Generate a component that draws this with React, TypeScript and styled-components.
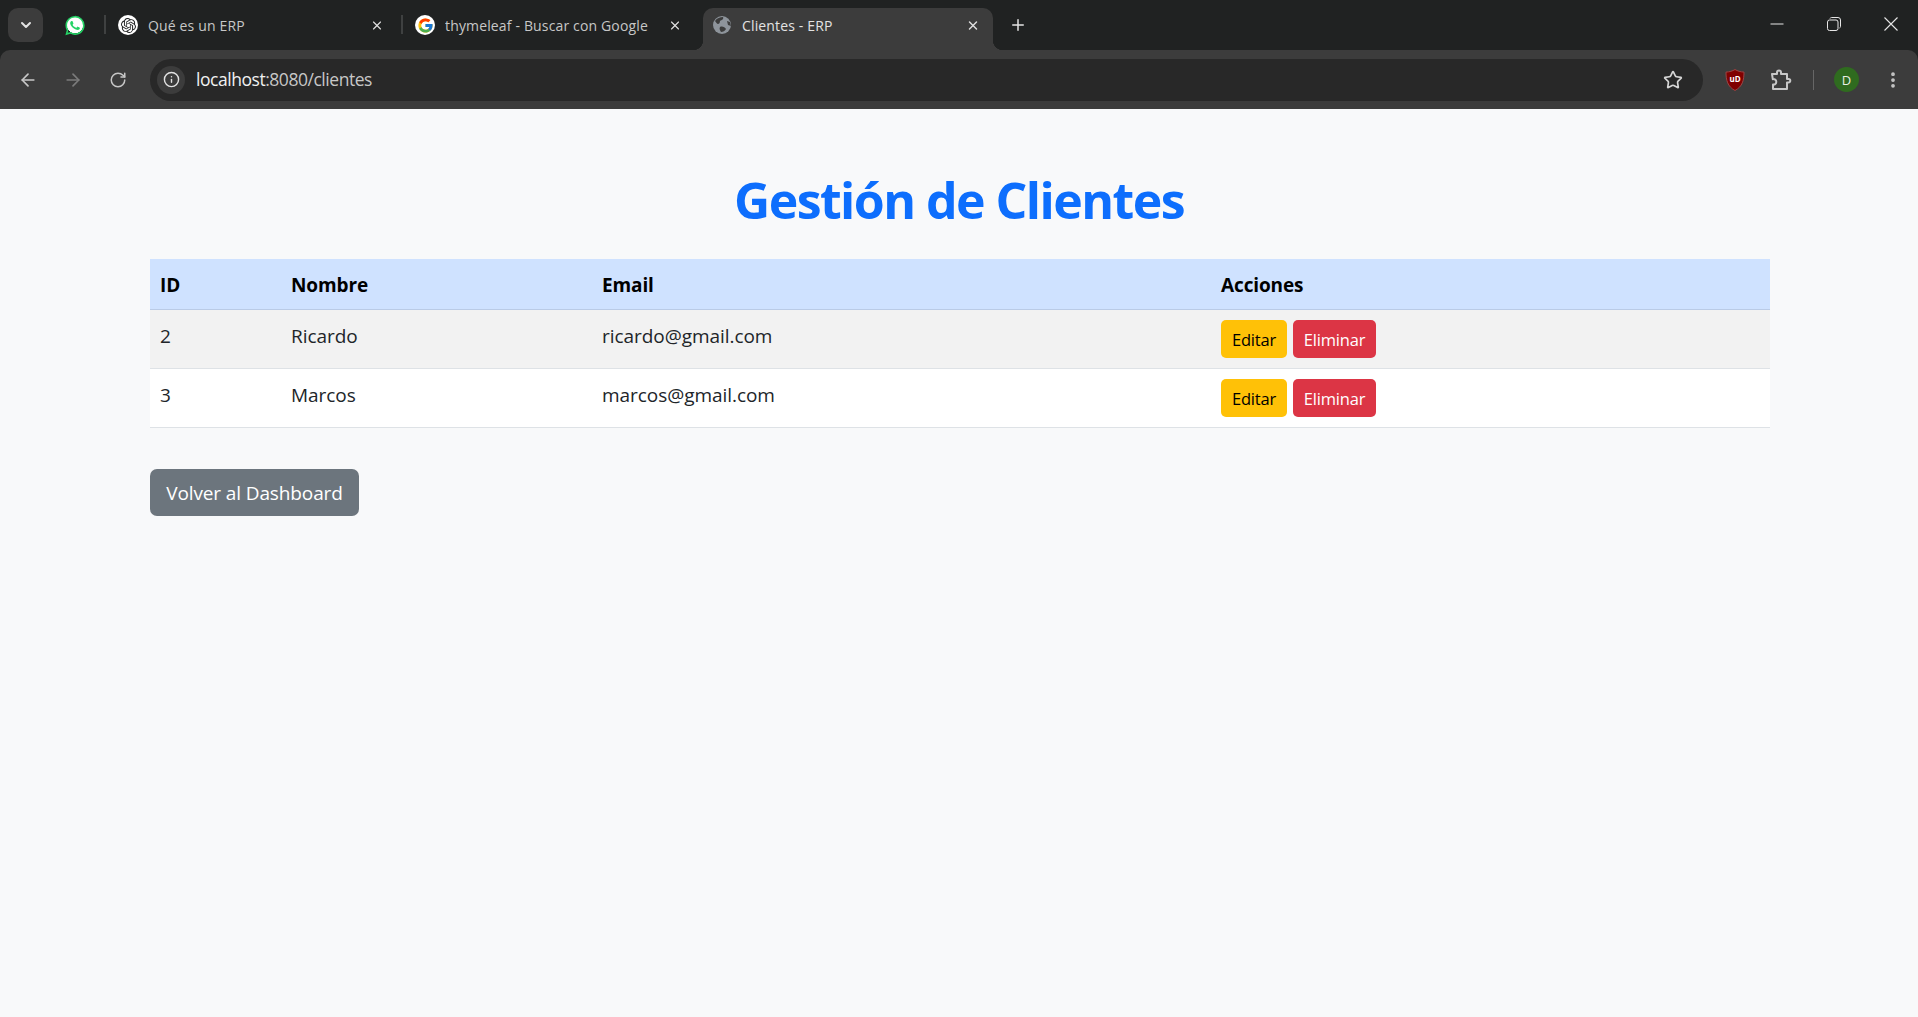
import React from 'react';
import styled, { createGlobalStyle } from 'styled-components';
import { ArrowLeft, ArrowRight, ChevronDown, Info, MoreVertical, Plus, RotateCw, Star, X } from 'lucide-react';
import { FcGoogle } from 'react-icons/fc';
import { IoLogoWhatsapp } from 'react-icons/io5';
import { SiOpenai } from 'react-icons/si';

const GlobalStyle = createGlobalStyle`
  html, body {
    margin: 0;
    padding: 0;
    height: 100%;
    background: #f8f9fa;
    font-family: "Open Sans", "Noto Sans", sans-serif;
    overflow: hidden;
  }
  * { box-sizing: border-box; }
`;

const Shell = styled.div`
  width: 1918px;
  height: 1017px;
  display: flex;
  flex-direction: column;
  overflow: hidden;
  background: #202222;
`;

const TabStrip = styled.div`
  height: 50px;
  flex: none;
  display: flex;
  align-items: flex-start;
  padding-left: 8px;
`;

const TabSearch = styled.div`
  width: 35px;
  height: 34px;
  margin-top: 8px;
  border-radius: 10px;
  background: #3c3c3c;
  color: #e3e3e3;
  display: flex;
  align-items: center;
  justify-content: center;
`;

const PinnedTab = styled.div`
  width: 22px;
  height: 22px;
  margin: 14px 18px 0 21px;
  display: flex;
  align-items: center;
  justify-content: center;
  background: radial-gradient(circle, #fff 0 8px, transparent 8.5px);
  color: #25d366;
`;

const TabDivider = styled.div`
  width: 2px;
  height: 19px;
  margin-top: 15px;
  background: #3f4141;
`;

const Tab = styled.div<{ $active?: boolean; $width: number; $closeGap: number }>`
  position: relative;
  width: ${props => props.$width}px;
  height: 42px;
  margin-top: 8px;
  padding: 0 ${props => props.$closeGap}px 8px ${props => (props.$active ? 9 : 12)}px;
  display: flex;
  align-items: center;
  border-radius: 10px 10px 0 0;
  background: ${props => (props.$active ? '#3c3c3c' : 'transparent')};
  color: ${props => (props.$active ? '#e3e3e3' : '#c7c7c7')};

  ${props =>
    props.$active &&
    `
    &::before, &::after {
      content: '';
      position: absolute;
      bottom: 0;
      width: 10px;
      height: 10px;
    }
    &::before {
      left: -10px;
      background: radial-gradient(circle at 0 0, transparent 10px, #3c3c3c 10.5px);
    }
    &::after {
      right: -10px;
      background: radial-gradient(circle at 100% 0, transparent 10px, #3c3c3c 10.5px);
    }
  `}
`;

const Favicon = styled.span<{ $white?: boolean }>`
  width: 20px;
  height: 20px;
  flex: none;
  border-radius: 50%;
  background: ${props => (props.$white ? '#fff' : 'transparent')};
  color: #202222;
  display: flex;
  align-items: center;
  justify-content: center;
`;

const TabTitle = styled.span`
  flex: 1;
  margin-left: 10px;
  font-size: 14px;
  letter-spacing: 0.15px;
  white-space: nowrap;
  overflow: hidden;
`;

const TabClose = styled.span`
  width: 14px;
  height: 14px;
  flex: none;
  display: flex;
  align-items: center;
  justify-content: center;
  color: #dedede;
`;

const NewTab = styled.div`
  width: 18px;
  height: 18px;
  margin: 16px 0 0 16px;
  color: #e3e3e3;
  display: flex;
  align-items: center;
  justify-content: center;
`;

const WindowControls = styled.div`
  margin-left: auto;
  display: flex;
  align-items: center;
  height: 48px;
  padding-right: 20px;
  color: #e6e6e6;
  gap: 43px;
`;

const Toolbar = styled.div`
  height: 59px;
  flex: none;
  background: #3c3c3c;
  border-radius: 10px 10px 0 0;
  display: flex;
  align-items: center;
  padding-left: 17px;
`;

const NavIcon = styled.span<{ $dim?: boolean }>`
  width: 22px;
  height: 22px;
  margin-right: 23px;
  display: flex;
  align-items: center;
  justify-content: center;
  color: ${props => (props.$dim ? '#7b7b7b' : '#c7c7c7')};
`;

const Omnibox = styled.div`
  width: 1553px;
  height: 42px;
  margin-left: -2px;
  padding: 0 20px 0 7px;
  border-radius: 21px;
  background: #282828;
  display: flex;
  align-items: center;
`;

const SiteInfo = styled.span`
  width: 28px;
  height: 28px;
  border-radius: 50%;
  background: #3c3c3c;
  color: #e3e3e3;
  display: flex;
  align-items: center;
  justify-content: center;
`;

const Url = styled.span`
  margin: 0 0 2px 11px;
  font-size: 17.5px;
  letter-spacing: -0.46px;
  color: #c7c7c7;

  b {
    font-weight: 400;
    color: #f1f1f1;
  }
`;

const StarSlot = styled.span`
  margin-left: auto;
  color: #d6d6d6;
  display: flex;
`;

const ExtensionSlot = styled.span<{ $gap: number }>`
  margin-left: ${props => props.$gap}px;
  width: 22px;
  height: 22px;
  display: flex;
  align-items: center;
  justify-content: center;
  color: #c7c7c7;
`;

const ToolbarDivider = styled.span`
  width: 1px;
  height: 20px;
  margin-left: 21px;
  background: #666;
`;

const Avatar = styled.span`
  width: 25px;
  height: 25px;
  margin-left: 20px;
  border-radius: 50%;
  background: #2f6b1f;
  color: #e8f0e4;
  font-size: 13px;
  display: flex;
  align-items: center;
  justify-content: center;
`;

const Content = styled.main`
  flex: 1;
  padding: 60px 148px 0 150px;
  background: #f8f9fa;
`;

const Heading = styled.h1`
  margin: 0 0 30px;
  height: 60px;
  padding-top: 1px;
  padding-right: 2px;
  font-size: 50px;
  line-height: 60px;
  font-weight: 700;
  letter-spacing: -1.55px;
  text-align: center;
  color: #0d6efd;
`;

const Table = styled.table`
  width: 100%;
  table-layout: fixed;
  border-collapse: separate;
  border-spacing: 0;
  font-size: 19px;
  line-height: 30px;
  color: #212529;
`;

const HeadCell = styled.th<{ $width?: number }>`
  width: ${props => (props.$width ? `${props.$width}px` : 'auto')};
  padding: 11px 10px 9px;
  text-align: left;
  font-weight: 700;
  letter-spacing: -0.12px;
  color: #000;
  background: #cfe2ff;
  border-bottom: 1px solid #bacbe6;
`;

const Row = styled.tr<{ $striped?: boolean }>`
  background: ${props => (props.$striped ? '#f2f2f2' : '#fff')};
`;

const Cell = styled.td`
  padding: 11px 10px 9px;
  vertical-align: top;
  letter-spacing: -0.05px;
  border-bottom: 1px solid #dee2e6;
`;

const Actions = styled.div`
  display: flex;
  gap: 6px;
  margin: -1px 0 1px;
`;

const SmallButton = styled.button<{ $tone: 'warning' | 'danger'; $width: number }>`
  width: ${props => props.$width}px;
  height: 38px;
  padding: 0;
  border: 0;
  border-radius: 5px;
  font-family: inherit;
  font-size: 16.5px;
  letter-spacing: -0.2px;
  background: ${props => (props.$tone === 'warning' ? '#ffc107' : '#dc3545')};
  color: ${props => (props.$tone === 'warning' ? '#000' : '#fff')};
`;

const BackButton = styled.a`
  display: flex;
  align-items: center;
  justify-content: center;
  width: 209px;
  height: 47px;
  margin-top: 41px;
  border-radius: 7px;
  background: #6c757d;
  color: #fff;
  font-size: 19px;
  letter-spacing: -0.12px;
`;

const Globe = () => (
  <svg width="20" height="20" viewBox="0 0 20 20">
    <circle cx="10" cy="10" r="9" fill="#8e949b" />
    <path d="M3 6c2-3 5-4 8-4 1 2-1 3-3 4 0 2-1 3-2 3C5 9 4 7 3 6z" fill="#3c3c3c" />
    <path d="M8 12c2-1 5 0 6 2-1 2-3 3-5 3-1-2-2-3-1-5z" fill="#3c3c3c" />
    <path d="M15 6l3 1 1 4-3-1z" fill="#3c3c3c" />
  </svg>
);

const MinimizeIcon = () => (
  <svg width="14" height="14" viewBox="0 0 14 14" fill="none" stroke="currentColor">
    <path d="M.5 7h13" />
  </svg>
);

const RestoreIcon = () => (
  <svg width="14" height="14" viewBox="0 0 14 14" fill="none" stroke="currentColor">
    <rect x="0.5" y="3" width="10.5" height="10.5" rx="2" />
    <path d="M3 1.5c.3-.7.9-1 1.5-1H11A2.5 2.5 0 0 1 13.5 3v6.5c0 .7-.4 1.2-1 1.5" />
  </svg>
);

const CloseIcon = () => (
  <svg width="14" height="14" viewBox="0 0 14 14" fill="none" stroke="currentColor" strokeWidth="1.1">
    <path d="M.5.5l13 13M13.5.5l-13 13" />
  </svg>
);

const UBlockIcon = () => (
  <svg width="20" height="22" viewBox="0 0 20 22">
    <path d="M10 .5c2.5 1.6 5.500 2.400 9 2.600 0 8-1.500 14.500-9 18.400C2.500 17.600 1 11.100 1 3.100 4.500 2.900 7.500 2.100 10 .5z" fill="#800000" stroke="#9c4444" />
    <text x="10" y="12.500" textAnchor="middle" fontSize="8" fontWeight="700" fill="#fff" fontFamily="Open Sans, sans-serif">uD</text>
  </svg>
);

const PuzzleIcon = () => (
  <svg width="22" height="22" viewBox="0 0 22 22" fill="none" stroke="currentColor" strokeWidth="2" strokeLinejoin="round">
    <path d="M2 5h5V3.500a2 2 0 0 1 4 0V5h6v5h1.500a1.800 1.800 0 0 1 0 3.600H17V20H3v-4.500c2 .3 3.300-.9 3.300-2.700S4.500 9.800 2.800 10.200z" />
  </svg>
);

const clients = [
  { id: 2, name: 'Ricardo', email: 'ricardo@gmail.com' },
  { id: 3, name: 'Marcos', email: 'marcos@gmail.com' },
];

const App = () => (
  <Shell>
    <GlobalStyle />
    <TabStrip>
      <TabSearch>
        <ChevronDown size={16} strokeWidth={3} />
      </TabSearch>
      <PinnedTab>
        <IoLogoWhatsapp size={23} />
      </PinnedTab>
      <TabDivider />
      <Tab $width={295} $closeGap={17}>
        <Favicon $white>
          <SiOpenai size={15} />
        </Favicon>
        <TabTitle>Qué es un ERP</TabTitle>
        <TabClose>
          <X size={15} strokeWidth={2} />
        </TabClose>
      </Tab>
      <TabDivider />
      <Tab $width={300} $closeGap={21}>
        <Favicon $white>
          <FcGoogle size={17} />
        </Favicon>
        <TabTitle>thymeleaf - Buscar con Google</TabTitle>
        <TabClose>
          <X size={15} strokeWidth={2} />
        </TabClose>
      </Tab>
      <Tab $active $width={290} $closeGap={13}>
        <Favicon>
          <Globe />
        </Favicon>
        <TabTitle>Clientes - ERP</TabTitle>
        <TabClose>
          <X size={15} strokeWidth={2.500} />
        </TabClose>
      </Tab>
      <NewTab>
        <Plus size={18} strokeWidth={2} />
      </NewTab>
      <WindowControls>
        <MinimizeIcon />
        <RestoreIcon />
        <CloseIcon />
      </WindowControls>
    </TabStrip>
    <Toolbar>
      <NavIcon>
        <ArrowLeft size={20} strokeWidth={2} />
      </NavIcon>
      <NavIcon $dim>
        <ArrowRight size={20} strokeWidth={2} />
      </NavIcon>
      <NavIcon>
        <RotateCw size={18} strokeWidth={2} />
      </NavIcon>
      <Omnibox>
        <SiteInfo>
          <Info size={17} strokeWidth={2} />
        </SiteInfo>
        <Url>
          <b>localhost</b>:8080/clientes
        </Url>
        <StarSlot>
          <Star size={20} strokeWidth={2} />
        </StarSlot>
      </Omnibox>
      <ExtensionSlot $gap={21}>
        <UBlockIcon />
      </ExtensionSlot>
      <ExtensionSlot $gap={24}>
        <PuzzleIcon />
      </ExtensionSlot>
      <ToolbarDivider />
      <Avatar>D</Avatar>
      <ExtensionSlot $gap={23}>
        <MoreVertical size={20} strokeWidth={2.500} />
      </ExtensionSlot>
    </Toolbar>
    <Content>
      <Heading>Gestión de Clientes</Heading>
      <Table>
        <thead>
          <tr>
            <HeadCell $width={131}>ID</HeadCell>
            <HeadCell $width={311}>Nombre</HeadCell>
            <HeadCell $width={619}>Email</HeadCell>
            <HeadCell>Acciones</HeadCell>
          </tr>
        </thead>
        <tbody>
          {clients.map((client, index) => (
            <Row key={client.id} $striped={index % 2 === 0}>
              <Cell>{client.id}</Cell>
              <Cell>{client.name}</Cell>
              <Cell>{client.email}</Cell>
              <Cell>
                <Actions>
                  <SmallButton $tone="warning" $width={66}>Editar</SmallButton>
                  <SmallButton $tone="danger" $width={83}>Eliminar</SmallButton>
                </Actions>
              </Cell>
            </Row>
          ))}
        </tbody>
      </Table>
      <BackButton>Volver al Dashboard</BackButton>
    </Content>
  </Shell>
);

export default App;
